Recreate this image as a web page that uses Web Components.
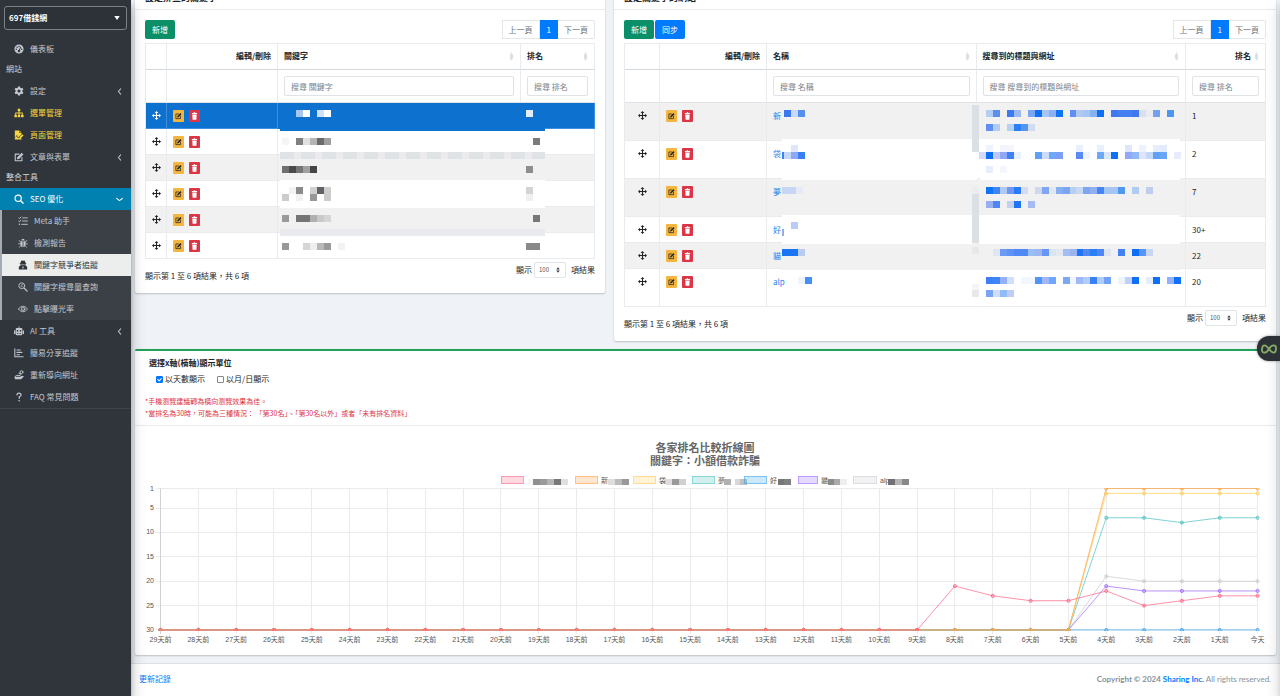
<!DOCTYPE html>
<html lang="zh-Hant">
<head>
<meta charset="utf-8">
<title>關鍵字競爭者追蹤</title>
<style>
html,body{margin:0;height:100%}
body{font:8px/12px "Noto Sans CJK TC","Open Sans",sans-serif;color:#212529;background:#eff3f7}
</style>
</head>
<body>
<seo-app></seo-app>
<script>
const define = (name, html, setup) => customElements.define(name, class extends HTMLElement {
  connectedCallback() {
    if (this.shadowRoot) return;
    const root = this.attachShadow({ mode: 'open' });
    const t = document.createElement('template');
    t.innerHTML = typeof html === 'function' ? html(this) : html;
    root.append(t.content.cloneNode(true));
    if (setup) setup(root, this);
  }
});

/* ---------- icons ---------- */
const F = 'fill="currentColor"';
const S = 'fill="none" stroke="currentColor" stroke-linecap="round" stroke-linejoin="round"';
const ICONS = {
  gauge: `<path ${F} fill-rule="evenodd" d="M12 1a11 11 0 1 0 0 22 11 11 0 0 0 0-22zM12 4a1.7 1.7 0 1 1 0 3.400 1.700 1.700 0 0 1 0-3.400zM5.500 11a1.700 1.700 0 1 1 0 3.400 1.700 1.700 0 0 1 0-3.400zM7.500 6.200a1.700 1.700 0 1 1 0 3.400 1.700 1.700 0 0 1 0-3.400zM18.500 11a1.700 1.700 0 1 1 0 3.400 1.700 1.700 0 0 1 0-3.400zM15.300 6l2 1-3.100 7.500a3 3 0 1 1-2-.9z"/>`,
  gear: `<path ${F} fill-rule="evenodd" d="M9.700 1h4.600l.7 3.300 2 1.100 3.200-1 2.300 4-2.500 2.200v2.800l2.500 2.200-2.300 4-3.200-1-2 1.100-.7 3.300H9.700L9 19.700l-2-1.100-3.200 1-2.300-4L4 13.400v-2.800L1.500 8.400l2.300-4 3.200 1 2-1.100zM12 8.300a3.700 3.700 0 1 0 0 7.400 3.700 3.700 0 0 0 0-7.400z"/>`,
  sitemap: `<path ${F} d="M9 2h6v6h-2v3h8v5h2v6h-6v-6h2v-3h-6v3h2v6H9v-6h2v-3H5v3h2v6H1v-6h2v-5h8V8H9z"/>`,
  filepen: `<path ${F} d="M2 1h10v6h6v3l-6.500 6.500V20H18v3H2zM13 1l5 5h-5zM13 17l7-7 3 3-7 7h-3z"/><path d="M4 18l3-5 2 5h3" fill="none" stroke="#2f353b" stroke-width="1.500"/>`,
  edit: `<path ${S} stroke-width="2.600" d="M12 5H3v16h16v-8"/><path ${F} d="M8 12.500L18.500 2l4 4L12 16.500l-5 1z"/>`,
  search: `<circle cx="10" cy="10" r="7.500" ${S} stroke-width="2.800"/><path ${S} stroke-width="3.200" d="M16 16l6 6"/>`,
  tasks: `<path ${S} stroke-width="2.200" d="M1.500 4.500l2 2L7 2.500M1.500 12l2 2L7 10M11 4.500h11.500M11 12h11.500M9 20h13.500"/><circle cx="3.500" cy="20" r="1.800" ${F}/>`,
  bug: `<path ${F} d="M8 6a4 4 0 0 1 8 0zM6 8h5v14q-5-1-5-7zM13 8h5v7q0 6-5 7z"/><path ${S} stroke-width="2" d="M6 10L3 6M18 10l3-4M6 14H1.500M18 14h4.500M7 18l-3 4M17 18l3 4"/>`,
  spy: `<path ${F} fill-rule="evenodd" d="M8 1l4 1 4-1 2 5.500 2 1V9h-2v4l4 3v7H2v-7l4-3V9H4V7.500l2-1zM8.500 10v2.500h2.500V10zM13 10v2.500h2.500V10zM12 15l-1.500 2 1 4h1l1-4z"/>`,
  searchd: `<circle cx="9" cy="9" r="7" ${S} stroke-width="2.200"/><path ${S} stroke-width="3" d="M15 15l7 7"/><path ${S} stroke-width="1.500" d="M11 6.500H8.500q-1.500 1 0 2.200l1.500.8q1 1.500-.5 2H7"/>`,
  eye: `<path ${S} stroke-width="2" d="M1 12Q12-2 23 12 12 26 1 12z"/><circle cx="12" cy="12" r="4.500" ${S} stroke-width="2"/><circle cx="12" cy="12" r="1.500" ${F}/>`,
  robot: `<path ${F} fill-rule="evenodd" d="M11 1h2v4h4q3 0 3 3v11q0 3-3 3H7q-3 0-3-3V8q0-3 3-3h4zM0 11h3v8H0zM21 11h3v8h-3zM8.500 9.500a2 2 0 1 0 0 4 2 2 0 0 0 0-4zM15.500 9.500a2 2 0 1 0 0 4 2 2 0 0 0 0-4zM7 16.500v2h2.500v-2zM10.800 16.500v2h2.500v-2zM14.500 16.500v2H17v-2z"/>`,
  bars: `<path ${S} stroke-width="2.500" d="M2 2v19h20M7 5h8M7 10.500h12M7 16h6"/>`,
  route: `<path ${S} stroke-width="2.400" d="M12 8h3q3 2 0 5H6q-5 2-3 6h14l5-3"/><circle cx="18" cy="5" r="3.500" ${S} stroke-width="2.200"/><path ${F} d="M2 16h12l6-2 3 2-6 6H2z"/>`,
  help: `<path ${S} stroke-width="3" d="M7 7q1-5 5.500-4.500T17 7q0 2.500-4.500 5v3"/><circle cx="12.300" cy="21" r="2" ${F}/>`,
  left: `<path ${S} stroke-width="3.500" d="M16 3L8 12l8 9"/>`,
  down: `<path ${S} stroke-width="3.500" d="M2 8l10 8 10-8"/>`,
  caret: `<path ${F} d="M1 4h22L12 20z"/>`,
  move: `<path ${F} d="M12 0l5 5.500h-3.500v5h5V7l5.500 5-5.500 5v-3.500h-5v5H17L12 24l-5-5.500h3.500v-5h-5V17L0 12l5.500-5v3.500h5v-5H7z"/>`,
  trash: `<path ${F} d="M3 3h6l1-2h4l1 2h6v3H3zM4.500 7.500h15L18.500 23h-13z"/>`,
  sort: `<path ${F} d="M12 1l7 9H5zM12 23l7-9H5z"/>`,
  diamond: `<path ${F} d="M12 0l8 9v6l-8 9-8-9V9z"/>`,
  loop: `<path ${S} stroke-width="2.800" d="M12 12Q8 6.500 5 6.500T1.500 12 5 17.500 12 12 19 6.500 22.500 12 19 17.500 12 12z"/>`
};
define('ui-icon', el => `<style>:host{display:block;flex:none;width:10px;height:10px}svg{display:block;width:100%;height:100%}</style>
<svg viewBox="0 0 24 24" aria-hidden="true" ${el.hasAttribute('stretch') ? 'preserveAspectRatio="none"' : ''}>${ICONS[el.getAttribute('name')]}</svg>`);

/* ---------- pixelated cover for private values ----------
   lines: [y, firstX, 'color color . color'] with 7px blocks, boxes: [x, y, w, h, color] */
const blocks = (lines = [], boxes = []) =>
  boxes.map(([x, y, w, h, c]) => `<rect x="${x}" y="${y}" width="${w}" height="${h}" fill="#${c}"/>`).join('') +
  lines.map(([y, x, s]) => s.split(' ').map((c, i) => {
    const a = Math.round(x + i * 6.96), b = Math.round(x + (i + 1) * 6.96);
    return c === '.' ? '' : `<rect x="${a}" y="${y}" width="${b - a}" height="7" fill="#${c}"/>`;
  }).join('')).join('');
define('pixel-mask', `<style>:host{position:absolute;inset:0;z-index:1;pointer-events:none}svg{display:block;width:100%;height:100%;overflow:visible}</style>
<svg shape-rendering="crispEdges" aria-hidden="true"></svg>`, (root, el) => {
  root.querySelector('svg').innerHTML = blocks(el.lines, el.boxes);
});

/* ---------- sidebar ---------- */
define('nav-item', el => `<style>
:host{display:block;color:#c2c7d0}
:host([tone=gold]){color:#f7d63e}
:host([tone=current]){color:#fff;background:#0081af}
:host([tone=picked]){color:#2f353b;background:#eceeed}
a{display:flex;align-items:center;gap:6px;height:22px;padding:0 8px 0 14px;color:inherit;text-decoration:none}
:host([sub]) a{padding-left:16px}
span{flex:1}
.chev{width:7px;height:7px}
</style><a href="#"><ui-icon name="${el.getAttribute('icon')}"></ui-icon><span><slot></slot></span>
${el.hasAttribute('chev') ? `<ui-icon class="chev" name="${el.getAttribute('chev')}"></ui-icon>` : ''}</a>`);

define('app-sidebar', `<style>
:host{display:block;background:#2f353b;position:relative;z-index:2;box-shadow:0 7px 14px rgba(0,0,0,.25),0 5px 5px rgba(0,0,0,.22)}
.site{position:relative;padding:6px 4px 8px}
select{appearance:none;width:100%;height:24px;box-sizing:border-box;border:1px solid #7b8187;border-radius:3px;background:#2d3238;color:#fff;font:bold 8px/12px "Noto Sans CJK TC",sans-serif;padding:0 4px}
.site ui-icon{position:absolute;right:11px;top:15px;width:6px;height:6px;color:#fff}
h2{margin:0;padding:0 6px;height:20px;font:8px/18px "Noto Sans CJK TC",sans-serif;color:#d0d4db}
.tree{background:#3a4046;border-left:2px solid #a3abb5}
.end{border-top:1px solid #3d444a}
</style>
<nav>
<div class="site"><select aria-label="網站"><option>697借錢網</option></select><ui-icon name="caret"></ui-icon></div>
<nav-item icon="gauge">儀表板</nav-item>
<h2>網站</h2>
<nav-item icon="gear" chev="left">設定</nav-item>
<nav-item icon="sitemap" tone="gold">選單管理</nav-item>
<nav-item icon="filepen" tone="gold">頁面管理</nav-item>
<nav-item icon="edit" chev="left">文章與表單</nav-item>
<h2>整合工具</h2>
<nav-item icon="search" tone="current" chev="down">SEO 優化</nav-item>
<div class="tree">
<nav-item sub icon="tasks">Meta 助手</nav-item>
<nav-item sub icon="bug">檢測報告</nav-item>
<nav-item sub icon="spy" tone="picked">關鍵字競爭者追蹤</nav-item>
<nav-item sub icon="searchd">關鍵字搜尋量查詢</nav-item>
<nav-item sub icon="eye">點擊曝光率</nav-item>
</div>
<nav-item icon="robot" chev="left">AI 工具</nav-item>
<nav-item icon="bars">簡易分享追蹤</nav-item>
<nav-item icon="route">重新導向網址</nav-item>
<nav-item icon="help">FAQ 常見問題</nav-item>
<div class="end"></div>
</nav>`);

/* ---------- cards ---------- */
define('list-card', `<style>
:host{display:block;background:#fff;border-radius:0 0 2px 2px;box-shadow:0 0 1px rgba(0,0,0,.13),0 1px 2px rgba(0,0,0,.2)}
header{height:9px;display:flex;align-items:flex-end;overflow:hidden;padding:0 10px;border-bottom:1px solid #e9ebed}
h3{flex:none;margin:0 0 5px;font:bold 9px/12px "Noto Sans CJK TC",sans-serif}
.body{padding:10px}
.bar{display:flex;justify-content:space-between;margin-bottom:4px}
.acts{display:flex;gap:1px}
</style>
<header><h3><slot name="title"></slot></h3></header>
<div class="body"><div class="bar"><div class="acts"><slot name="actions"></slot></div><page-links></page-links></div><slot></slot></div>`);

define('tool-button', `<style>
button{display:block;width:30px;height:19px;padding:0;border:0;border-radius:2px;background:#0a8f68;color:#fff;font:inherit}
:host([tone=blue]) button{background:#007bff}
</style><button type="button"><slot></slot></button>`);

define('page-links', `<style>
:host{display:flex;height:19px;color:#6c757d}
a{display:flex;align-items:center;box-sizing:border-box;height:19px;padding:0 6px;color:inherit;text-decoration:none;border:1px solid #e4e7ea;background:#fff}
a:first-child{border-radius:2px 0 0 2px;border-right:0}
a:last-child{border-radius:0 2px 2px 0;border-left:0}
.on{background:#007bff;border-color:#007bff;color:#fff}
</style><a href="#">上一頁</a><a href="#" class="on">1</a><a href="#">下一頁</a>`);

define('row-tools', `<style>
:host{display:flex;gap:5px}
button{width:11px;height:12px;padding:0;border:0;border-radius:1px;display:grid;place-items:center;background:#f5b63f;color:#212529}
.del{background:#dc3545;color:#fff}
ui-icon{width:7px;height:8px}
</style><button type="button" aria-label="編輯"><ui-icon name="edit"></ui-icon></button><button type="button" class="del" aria-label="刪除"><ui-icon name="trash" stretch></ui-icon></button>`);

const W = 'ffffff', G = 'f1f1f1';
const strip = (x, y) => Array.from({ length: 13 }, (_, i) => [x + i * 21, y, i === 12 ? 13 : 14, 7, 'e0e3e6']);
const GRIDS = {
  words: {
    widths: [21, 111, 0, 74], heads: ['', '編輯/刪除', '關鍵字', '排名'], filters: [2, 3], sorts: [2, 3], right: [1],
    rows: [
      { h: 26, hot: true, c: [null, null, { boxes: [[2, 0, 265, 28, '0d71d0']], lines: [[7, 18, 'a8c6f0 ffffff . d0e0f8 ffffff']] }, { lines: [[7, 5, 'e2ecfb']] }] },
      { h: 26, c: [null, null, { boxes: [[2, 2, 265, 21, W], [2, 23, 265, 7, 'ebebed'], ...strip(2, 23)], lines: [[9, 4, 'f5f5f5 . 808080 e0e0e0 b5b5b5 6a6a6a a0a0a0']] }, { lines: [[9, 12, '7a7a7a']] }] },
      { h: 26, c: [null, null, { boxes: [[2, 4, 265, 21, G], [2, 25, 265, 4, W]], lines: [[11, 4, '707070 4a4a4a 757575 a0a0a0 454545']] }, { lines: [[11, 5, '8e8e8e']] }] },
      { h: 26, c: [null, null, { boxes: [[2, 2, 265, 25, W]], lines: [[6, 4, '. f2f2f2 8a8a8a . d0d0d0 606468 cfcfcf'], [13, 4, 'cccccc . f0f0f0 . 989898 . cccccc']] }, { lines: [[6, 5, 'd4d4d4'], [13, 5, 'f0f0f0']] }] },
      { h: 26, c: [null, null, { boxes: [[2, 1, 265, 21, G], [2, 22, 265, 7, 'e9eaee']], lines: [[8, 4, '999999 . 757575 757575 b0b0b0 c8cac9 d5d5d5']] }, { lines: [[8, 12, '777777']] }] },
      { h: 26, c: [null, null, { boxes: [[2, 3, 265, 18, W]], lines: [[10, 4, '999999 . . d5d5d5 eeeeee b8b8b8 9a9a9a . f2f2f2']] }, { lines: [[10, 5, '888888 888888']] }] }
    ]
  },
  rivals: {
    widths: [35, 107, 0, 0, 80], heads: ['', '編輯/刪除', '名稱', '搜尋到的標題與網址', '排名'], filters: [2, 3, 4], sorts: [2, 3, 4], right: [1, 4],
    rows: [
      { h: 38, name: '新', rank: '1', c: [null, null,
        { boxes: [[15, 36, 194, 2, W]], lines: [[7, 17, '3b78f0 c8d8f8 5590f0']] },
        { boxes: [[-1, 36, 204, 2, W], [-5, 2, 7, 47, 'dbe0e4']], lines: [[7, 9, 'b4cdf5 5a8ef0 . 3f7bf0 a0b8f0 . 7aa5f2 0d70f2 a5c5f5 8db0f2 1075f2 . 5f8ff2 b0c8f2 a5c5f5 86b2f2 0d70f2 . 3f78f0 457ff2 4580f2 3f78f0 d8e0f0 ebebf0 75a0f0 . 4f95f2'], [21, 9, '5f8ff2 b0ccf5 . b8d0f2 2a7ff2 5595f2 d0dcf2']] }] },
      { h: 38, name: '袋', rank: '2', c: [null, null,
        { boxes: [[15, 11, 2, 7, '3d80f5'], [15, 36, 194, 3, W]], lines: [[4, 24, 'dfe6fc'], [11, 17, 'c5d8f8 8fa8f5 3a80f5']] },
        { boxes: [[3, 36, 200, 3, W], [-1, 11, 2, 27, W]], lines: [[4, 9, 'eef4fe . f2f4fe f5f5fe . . . . . . . . . e8f0fe . . e8f0fe . . . dfe6fc . eef2fe . e6eefc e2eafc'], [11, 2, 'd5d8f8 1070f2 c0c8f5 8fa8f5 3f80f5 e8f0fd . . 5f9ff5 ccdcfa 70a8f8 7a9ff8 . . 5a8af5 eef4fe . 70a8f8 d8e8fd 0d70f5 . 90a8f5 90b8f8 dfe4fa c5d8fa 60a0f5 6aa5f8 . e8ecfc'], [25, 9, 'e6eefc . f5f5fe']] }] },
      { h: 38, name: '夢', rank: '7', c: [null, null,
        { boxes: [[15, 36, 194, 2, W]], lines: [[8, 15, 'c8d5f5 c8d5f5 e6eaf5']] },
        { boxes: [[-1, 36, 204, 2, W], [-5, 8, 7, 7, 'ebecee'], [-5, 15, 7, 49, 'dbe0e4']], lines: [[8, 9, '0d75f5 3f85f2 b0c8f2 6f98f2 2a7af5 d5dcf2 . d0d8ee 80a5f2 e0e8f2 85aff2 7aa5f2 b5d0f2 c8d8f0 80a5f0 90b0f2 4585f5 a5c5f2 a5c5f2 5098f2 . b0ccf2 . c0ccf0'], [22, 9, '98b0f2 4f85f5 . c5d0f0 1f75f5 . a5bcf2']] }] },
      { h: 26, name: '好', rank: '30+', c: [null, null,
        { boxes: [[15, 12, 2, 7, '9aa8f0'], [15, 25, 190, 2, W]], lines: [[5, 24, 'b8ccf5']] }, { boxes: [[2, 25, 201, 2, W]] }] },
      { h: 26, name: '貓', rank: '22', c: [null, null,
        { boxes: [[15, 25, 194, 2, G], [15, 6, 2, 7, '1a75f5']], lines: [[6, 17, '1a75f5 1a75f5 b8ccf3']] },
        { boxes: [[-1, 25, 204, 2, G], [-5, 4, 7, 7, 'e6e8ea']], lines: [[6, 16, 'dde6f2 6a9af5 5f92f5 5088f5 5088f5 98bff5 a0b4f2 6595f5 dbe4f2 e4e8f0 a5bcf2 9ab4f2 1f75f5 5088f0 2a7ff5 4f85f5 e0e4f0 . 4580f5 . 0d70f5 5595f5 c8d6f2']] }] },
      { h: 38, name: 'alp', rank: '20', c: [null, null,
        { lines: [[8, 31, 'eef4fe 4590f5']] },
        { boxes: [[-5, 15, 7, 6, 'f5f5f7'], [-5, 21, 7, 7, 'e6e8ea']], lines: [[8, 9, '3a80f8 4085f8 95b0f8 cfe0fc . f2f6fe f2f6fe 5095f8 a0b8f8 70a5f8 . 7aa8f5 f0f5fe a0b8fa b0ccfa 3a80f5 b0ccfa 70a0f8 . eef4fe c0d0f8 0d70f5 . e4eefe 0d70f5 . 95b0f8 1070f8'], [21, 9, '78a5f5 cfdcfa 90bdf5 c0ccf8']] }] }
    ]
  }
};

define('data-grid', el => {
  const g = GRIDS[el.getAttribute('kind')];
  const last = g.heads.length - 1;
  return `<style>
:host{display:block}
table{width:100%;table-layout:fixed;border-spacing:0;border-left:1px solid #e9ecef}
th,td{box-sizing:border-box;padding:0;position:relative;border:0 solid #e9ecef;border-width:0 1px 1px 0;vertical-align:top;text-align:left}
th{height:27px;border-top-width:1px;border-bottom-color:#d5dade;vertical-align:middle;font-weight:bold}
.filter td{height:33px;border-bottom-color:#dee2e6;vertical-align:middle;padding:0 6px}
.h{display:flex;align-items:center;padding:0 6px 1px}
.h span{flex:1}
.h.r span{text-align:right}
.h ui-icon{width:5px;height:9px;margin-left:3px;color:#dcdfe2}
input{display:block;width:100%;height:20px;box-sizing:border-box;border:1px solid #dfe3e7;border-radius:2px;padding:0 6px;font:inherit;color:#495057;background:#fff}
input::placeholder{color:#7b848c;opacity:1}
tbody tr:nth-child(odd) td{background:#f1f1f1}
tbody tr.hot td{background:#0d71d0;color:#fff;border-color:#3f8fdc}
tbody tr.hot td.m{border-color:#0d71d0}
td.m{border-right-color:transparent}
td.m:last-child{border-right-color:#e9ecef}
.mv{display:grid;place-items:center;padding-top:8px}
.mv ui-icon{width:9px;height:9px}
row-tools{padding:7px 6px 0}
.t{padding:7px 6px 0}
.t a{color:#1a80f5;text-decoration:none}
.foot{display:flex;justify-content:space-between;align-items:flex-start;height:24px}
.info{padding-top:11px}
.len{display:flex;align-items:center;gap:2px;padding-top:3px}
.box{position:relative;margin-right:3px}
select{appearance:none;display:block;width:32px;height:16px;border:1px solid #e1e4e8;border-radius:2px;background:#fff;padding:0 4px;font:6px/12px "Noto Sans CJK TC",sans-serif;color:#495057}
.box ui-icon{position:absolute;right:5px;top:5px;width:6px;height:6px;color:#343a40}
</style>
<table><colgroup>${g.widths.map(w => `<col${w ? ` style="width:${w}px"` : ''}>`).join('')}</colgroup>
<thead><tr>${g.heads.map((h, i) => `<th scope="col"><div class="h${g.right.includes(i) ? ' r' : ''}"><span>${h}</span>${g.sorts.includes(i) ? '<ui-icon name="diamond" stretch></ui-icon>' : ''}</div></th>`).join('')}</tr>
<tr class="filter">${g.heads.map((h, i) => `<td>${g.filters.includes(i) ? `<input type="text" aria-label="搜尋 ${h}" placeholder="搜尋 ${h}">` : ''}</td>`).join('')}</tr></thead>
<tbody>${g.rows.map(r => `<tr class="${r.hot ? 'hot' : ''}" style="height:${r.h}px">${g.heads.map((h, i) => {
    if (i === 0) return '<td><div class="mv"><ui-icon name="move"></ui-icon></div></td>';
    if (i === 1) return '<td><row-tools></row-tools></td>';
    const text = i === 2 && r.name ? `<div class="t"><a href="#">${r.name}</a></div>` : i === last && r.rank ? `<div class="t">${r.rank}</div>` : '';
    return `<td class="${r.c[i] && i < last - (r.rank ? 1 : 0) ? 'm' : ''}">${text}</td>`;
  }).join('')}</tr>`).join('')}</tbody></table>
<div class="foot"><div class="info">顯示第 1 至 6 項結果，共 6 項</div>
<label class="len"><span>顯示</span><span class="box"><select><option>100</option></select><ui-icon name="sort"></ui-icon></span><span>項結果</span></label></div>`;
}, (root, el) => {
  const g = GRIDS[el.getAttribute('kind')];
  root.querySelectorAll('tbody tr').forEach((tr, r) => g.rows[r].c.forEach((m, i) => {
    if (!m) return;
    const mask = document.createElement('pixel-mask');
    Object.assign(mask, m);
    tr.cells[i].append(mask);
  }));
});

/* ---------- chart ---------- */
const lead = n => Array(n).fill(30);
const SERIES = [
  { c: '#ff6384', v: [...lead(21), 21, 23, 24, 24, 22, 25, 24, 23, 23], x: 366, w: 23, t: '', m: [[393, 'f5f5f5'], [398, '8f8f8f'], [405, '9a9a9a'], [412, 'b5b5b5'], [419, '777777'], [426, 'e0e0e0']] },
  { c: '#ff9f40', v: [...lead(25), 1, 1, 1, 1, 1], x: 440, w: 23, t: '新', m: [[473, 'dddddd'], [480, 'bbbbbb'], [487, '999999']] },
  { c: '#ffcd56', v: [...lead(25), 2, 2, 2, 2, 2], x: 498, w: 23, t: '袋', m: [[531, 'dddddd'], [537, '9a9a9a'], [544, 'd0d0d0']] },
  { c: '#4bc0c0', v: [...lead(25), 7, 7, 8, 7, 7], x: 557, w: 23, t: '夢', m: [[589, 'b0b0b0'], [600, 'd8d8d8'], [605, 'c0c0c0']] },
  { c: '#36a2eb', v: lead(30), x: 609, w: 23, t: '好', m: [[643, '777777'], [649, '808080']] },
  { c: '#9966ff', v: [...lead(25), 21, 22, 22, 22, 22], x: 663, w: 20, t: '貓', m: [[693, '8a8a8a'], [699, 'aaaaaa'], [705, 'eeeeee']] },
  { c: '#c9cbcf', v: [...lead(25), 19, 20, 20, 20, 20], x: 718, w: 24, t: 'alp', m: [[753, '707070'], [760, 'b5b5b5'], [767, '888888']] }
];
define('rank-chart', () => {
  const X = i => 25.5 + i * 37.83, Y = v => 62.5 + (v - 1) * 4.879;
  const ticks = [1, 5, 10, 15, 20, 25, 30];
  let s = '';
  ticks.forEach(v => s += `<path class="g" d="M21 ${Math.floor(Y(v)) + .5}H1122.500"/><text class="y" x="19" y="${Y(v) + 2}">${v}</text>`);
  for (let i = 0; i < 30; i++) s += `<path class="g${i ? '' : ' ax'}" d="M${Math.floor(X(i)) + .5} 62.500V208"/><text class="x" x="${X(i)}" y="216">${i === 29 ? '今天' : 29 - i + '天前'}</text>`;
  let p = '';
  [...SERIES].reverse().forEach(d => {
    p += `<g stroke="${d.c}" fill="none"><polyline opacity=".7" points="${d.v.map((v, i) => X(i) + ',' + Y(v)).join(' ')}"/>` +
      d.v.map((v, i) => `<circle cx="${X(i)}" cy="${Y(v)}" r="1.600" fill="${d.c}" fill-opacity=".3" stroke-opacity=".8"/>`).join('') + '</g>';
  });
  let l = '';
  SERIES.forEach(d => {
    l += `<rect x="${d.x + .5}" y="50.500" width="${d.w - 1}" height="7" fill="${d.c}" fill-opacity=".25" stroke="${d.c}" stroke-opacity=".6"/>` +
      (d.t ? `<text x="${d.x + d.w + 3}" y="57">${d.t}</text>` : '') +
      d.m.map(([x, c]) => `<rect x="${x}" y="53" width="7" height="6" fill="#${c}"/>`).join('');
  });
  return `<style>
:host{display:block}
svg{display:block;width:100%;height:auto}
text{font:7px "Liberation Sans","Noto Sans CJK TC",sans-serif;fill:#555}
.x,.ttl{text-anchor:middle}.y{text-anchor:end}
.ttl{font-size:11px;font-weight:bold;fill:#666}
.g{stroke:#ebebeb;fill:none}.ax{stroke:#d2d2d2}
</style><svg viewBox="0 0 1141 229" role="img" aria-label="各家排名比較折線圖">
<defs><clipPath id="area"><rect x="20" y="62" width="1106" height="143"/></clipPath></defs>
<text class="ttl" x="570" y="26">各家排名比較折線圖</text><text class="ttl" x="570" y="39">關鍵字：小額借款詐騙</text>
${l}${s}<g clip-path="url(#area)">${p}</g></svg>`;
});

define('chart-card', `<style>
:host{display:block;background:#fff;border-top:2px solid #1fa35b;border-radius:2px;box-shadow:0 0 1px rgba(0,0,0,.13),0 1px 2px rgba(0,0,0,.2)}
header{padding:5px 10px 6px;border-bottom:1px solid #e9ebed}
h3{margin:0 0 0 4px;font:bold 8px/14px "Noto Sans CJK TC",sans-serif}
.opts{display:flex;gap:12px;align-items:center;height:18px;padding-left:11px}
label{display:flex;align-items:center;gap:2px}
input{appearance:none;position:relative;box-sizing:border-box;width:7px;height:7px;margin:0;border:1px solid #858585;border-radius:1px;background:#fff}
input:checked{border-color:#0075ff;background:#0075ff}
input:checked::after{content:"";position:absolute;left:1px;top:0;width:2px;height:3px;border:solid #fff;border-width:0 1px 1px 0;transform:rotate(45deg)}
.note{margin-top:7px;font-size:7px;color:#e0323f}
p{margin:0}
</style>
<header><h3>選擇x軸(橫軸)顯示單位</h3>
<div class="opts"><label><input type="checkbox" checked>以天數顯示</label><label><input type="checkbox">以月/日顯示</label></div>
<div class="note"><p>*手機瀏覽建議轉為橫向瀏覽效果為佳。</p><p>*當排名為30時，可能為三種情況： 「第30名」、「第30名以外」或者「未有排名資料」</p></div></header>
<rank-chart></rank-chart>`);

define('page-footer', `<style>
:host{display:flex;justify-content:space-between;align-items:flex-start;background:#fff;border-top:1px solid #dee2e6;padding:9px 9px 10px 8px;color:#869099}
a{color:#007bff;text-decoration:none}
div{font-family:Lato,"Noto Sans CJK TC",sans-serif}
</style><a href="#">更新記錄</a><div><b>Copyright © 2024 <a href="#">Sharing Inc.</a></b> All rights reserved.</div>`);

define('help-tab', `<style>
:host{position:fixed;right:0;top:336px;z-index:4}
button{display:grid;place-items:center;width:23px;height:25px;padding:0;border:0;border-radius:12px 0 0 12px;background:#2b3137;color:#86a866;box-shadow:0 0 3px rgba(0,0,0,.4)}
ui-icon{width:16px;height:16px}
</style><button type="button" aria-label="小工具"><ui-icon name="loop"></ui-icon></button>`);

define('seo-app', `<style>
:host{display:grid;grid-template-columns:131px minmax(0,1fr);min-height:100%}
.page{display:flex;flex-direction:column;min-width:0}
main{padding:0 4px 8px}
.pair{display:grid;grid-template-columns:470fr 662fr;gap:9px;align-items:start;margin-bottom:8px}
page-footer{flex:1}
.edge{position:fixed;top:0;bottom:0;left:100%;width:125px;box-shadow:0 7px 14px rgba(0,0,0,.2),0 5px 5px rgba(0,0,0,.1);z-index:3}
</style>
<app-sidebar></app-sidebar>
<div class="page"><main>
<div class="pair">
<list-card><span slot="title">設定排查的關鍵字</span><tool-button slot="actions">新增</tool-button><data-grid kind="words"></data-grid></list-card>
<list-card><span slot="title">設定關鍵字的網站</span><tool-button slot="actions">新增</tool-button><tool-button slot="actions" tone="blue">同步</tool-button><data-grid kind="rivals"></data-grid></list-card>
</div>
<chart-card></chart-card>
</main><page-footer></page-footer></div>
<div class="edge"></div>
<help-tab></help-tab>`);
</script>
</body>
</html>
